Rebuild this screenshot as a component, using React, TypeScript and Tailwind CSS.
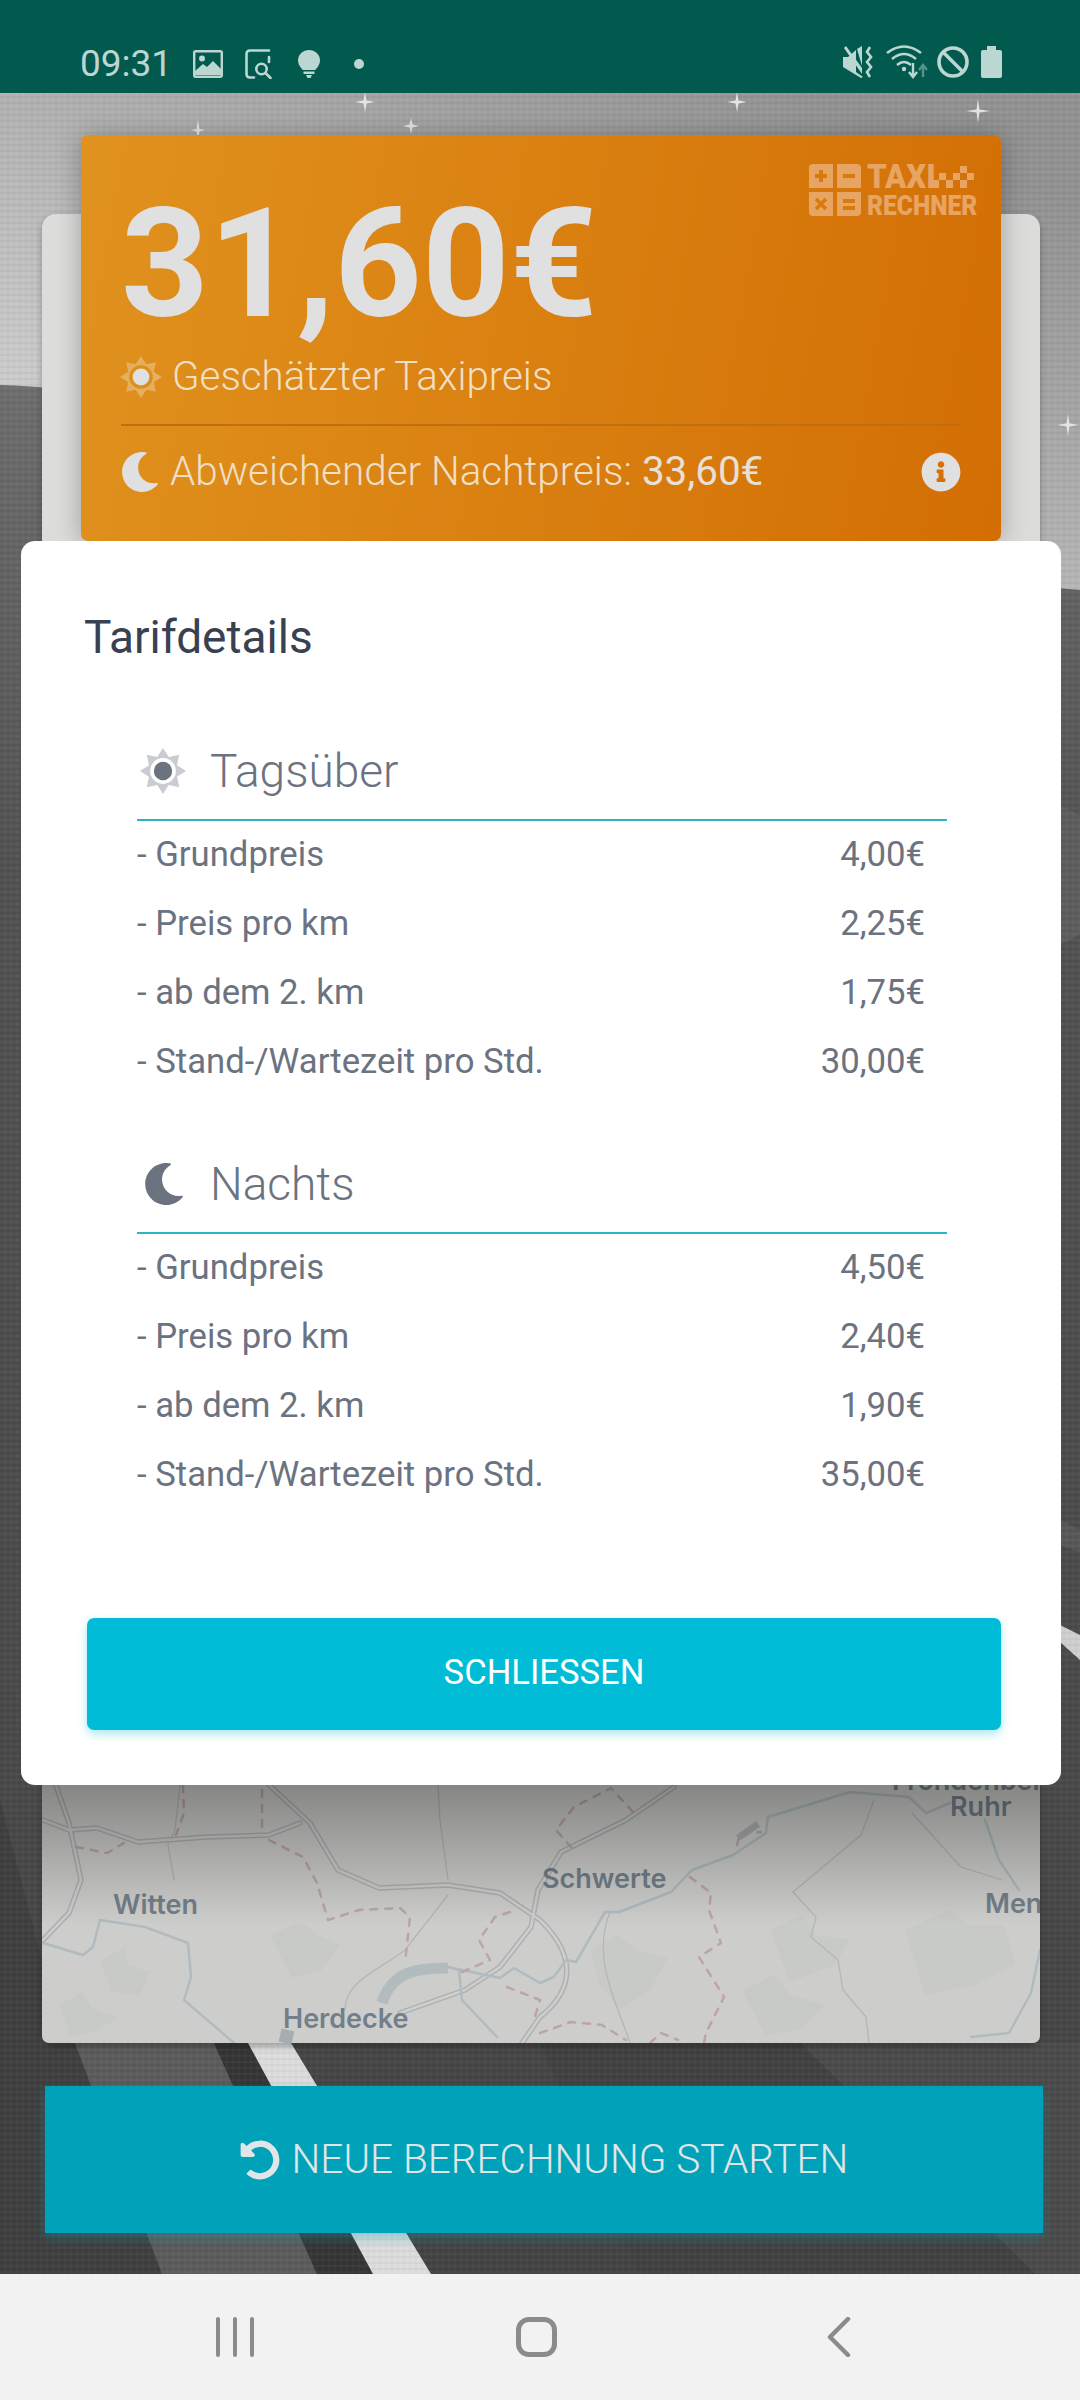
import { FaInfoCircle, FaMoon, FaUndoAlt } from 'react-icons/fa'

const starPoints = (() => {
	const pts: string[] = []
	for (let i = 0; i < 16; i++) {
		const r = i % 2 === 0 ? 50 : 33
		const a = (i * Math.PI) / 8 - Math.PI / 2
		pts.push(`${(50 + r * Math.cos(a)).toFixed(1)},${(50 + r * Math.sin(a)).toFixed(1)}`)
	}
	return pts.join(' ')
})()

const SunIcon = ({ className, ray, ring, dot }: { className: string; ray: string; ring: string; dot: string }) => (
	<svg viewBox="0 0 100 100" className={className}>
		<polygon points={starPoints} fill={ray} />
		<circle cx="50" cy="50" r="28" fill={ring} />
		<circle cx="50" cy="50" r="20" fill={dot} />
	</svg>
)

const StatusBar = () => (
	<div className="relative z-10 flex h-[93px] shrink-0 items-start justify-between bg-[#025a4e] pl-[80px] pr-[78px] pt-[45px] text-[#bcd6d1]">
		<div className="flex items-center">
			<span className="w-[113px] text-[37px] leading-[38px] font-['Roboto',sans-serif] font-normal">09:31</span>
			<svg viewBox="0 0 30 28" className="h-[28px] w-[30px]">
				<rect x="1.2" y="1.2" width="27.6" height="25.6" rx="1.5" fill="none" stroke="currentColor" strokeWidth="2.4" />
				<circle cx="9" cy="8.5" r="3" fill="currentColor" />
				<path d="M2 25 L2 21 L10 14 L14 17 L20 11 L28 19 L28 25 Z" fill="currentColor" />
			</svg>
			<svg viewBox="0 0 28 30" className="ml-[22px] h-[30px] w-[28px]" fill="none" stroke="currentColor" strokeWidth="2.6" strokeLinecap="round">
				<path d="M24 1.5 H5 Q1.5 1.5 1.5 5 V25 Q1.5 28.5 5 28.5 H9" />
				<path d="M24 8 V13" />
				<circle cx="16.5" cy="20" r="5.2" />
				<path d="M20.5 24 L25.5 29" />
			</svg>
			<svg viewBox="0 0 22 28" className="ml-[25px] h-[28px] w-[22px]" fill="currentColor">
				<path d="M11 0 C5 0 0 4.600 0 10.500 C0 14.500 2.400 17.500 4.800 20 L17.200 20 C19.600 17.500 22 14.500 22 10.500 C22 4.600 17 0 11 0 Z" />
				<path d="M5.500 21.500 H16.500 V24 H5.500 Z M8 25 H14 L12.500 28 H9.500 Z" />
			</svg>
			<span className="ml-[34px] h-[10px] w-[10px] rounded-full bg-[#bcd6d1]" />
		</div>
		<div className="flex items-center">
			<svg viewBox="0 0 30 32" className="h-[32px] w-[30px]" fill="currentColor">
				<path d="M0 11 H5 L13 4 V26 L20 31 L18 32 L0 21 Z" />
				<path d="M1 2 L3 0 L19 22 L19 28 Z" />
				<path d="M14 3 L19 0 V20 Z" />
				<path d="M27 1 L24 6 L28 11 L24 16 L28 21 L24 26 L27 31" fill="none" stroke="currentColor" strokeWidth="2.600" />
			</svg>
			<svg viewBox="0 0 42 34" className="ml-[13px] h-[34px] w-[42px]" fill="none" stroke="currentColor" strokeWidth="2.600">
				<path d="M1 8 Q18 -5 35 8" />
				<path d="M6 14 Q18 4 30 14" />
				<path d="M11 20 Q18 14 25 20" />
				<circle cx="18" cy="24" r="2.200" fill="currentColor" stroke="none" />
				<path d="M27 18 V31 M23 27 L27 32 L31 27" strokeWidth="2.400" />
				<path d="M37 32 V21 M33 25 L37 20 L41 25" strokeWidth="2.400" opacity="0.45" />
			</svg>
			<svg viewBox="0 0 32 32" className="ml-[9px] h-[32px] w-[32px]" fill="none" stroke="currentColor" strokeWidth="3.600">
				<circle cx="16" cy="16" r="14" />
				<path d="M6 6 L26 26" />
			</svg>
			<svg viewBox="0 0 21 32" className="ml-[12px] h-[32px] w-[21px]" fill="currentColor">
				<path d="M6 0 H15 V4 H19 Q21 4 21 6 V30 Q21 32 19 32 H2 Q0 32 0 30 V6 Q0 4 2 4 H6 Z" />
			</svg>
		</div>
	</div>
)

const NavBar = () => (
	<div className="relative z-10 flex h-[126px] shrink-0 items-center bg-[#f2f2f2] pl-[216px]">
		<div className="flex gap-[13px]">
			<span className="h-[40px] w-[4px] rounded-full bg-[#8b8b8b]" />
			<span className="h-[40px] w-[4px] rounded-full bg-[#8b8b8b]" />
			<span className="h-[40px] w-[4px] rounded-full bg-[#8b8b8b]" />
		</div>
		<span className="ml-[262px] h-[40px] w-[41px] rounded-[13px] border-[5px] border-[#8b8b8b]" />
		<svg viewBox="0 0 24 40" className="ml-[270px] h-[40px] w-[24px]" fill="none" stroke="#8b8b8b" strokeWidth="4.500" strokeLinecap="round" strokeLinejoin="round">
			<path d="M21 2 L3 20 L21 38" />
		</svg>
	</div>
)

const Backdrop = () => (
	<svg viewBox="0 93 1080 2181" preserveAspectRatio="none" className="absolute inset-0 h-full w-full">
		<defs>
			<pattern id="weave" width="6" height="6" patternUnits="userSpaceOnUse">
				<path d="M0 1 H6" stroke="#000" strokeOpacity="0.06" strokeWidth="1" />
				<path d="M0 4 H6" stroke="#fff" strokeOpacity="0.05" strokeWidth="1" />
				<path d="M2 0 V6" stroke="#000" strokeOpacity="0.03" strokeWidth="1" />
				<path d="M5 0 V6" stroke="#fff" strokeOpacity="0.03" strokeWidth="1" />
			</pattern>
			<linearGradient id="sky" x1="0.75" y1="0" x2="0.1" y2="0.75">
				<stop offset="0" stopColor="#929292" />
				<stop offset="1" stopColor="#d2d2d2" />
			</linearGradient>
			<linearGradient id="ground" x1="0" y1="0" x2="0" y2="1">
				<stop offset="0" stopColor="#6e6e6e" />
				<stop offset="0.25" stopColor="#525252" />
				<stop offset="1" stopColor="#434343" />
			</linearGradient>
		</defs>
		<rect x="0" y="93" width="1080" height="520" fill="url(#sky)" />
		<path d="M0 385 C300 395 700 560 1080 590 V2274 H0 Z" fill="url(#ground)" />
		<ellipse cx="1040" cy="875" rx="70" ry="72" fill="#5d5d5d" />
		<path d="M1060 1625 L1080 1635 V1660 L1060 1642 Z" fill="#cfcfcf" />
		<path d="M1060 1520 L1080 1530 V1552 L1060 1545 Z" fill="#575757" />
		<path d="M0 1800 L42 1960 V2043 H75 L162 2274 H0 Z" fill="#3f3f3f" />
		<path d="M75 2043 H214 L317 2274 H162 Z" fill="#5b5b5b" />
		<path d="M214 2043 H248 L373 2274 H317 Z" fill="#353535" />
		<path d="M248 2043 H291 L431 2274 H373 Z" fill="#dcdcdc" />
		<path d="M800 2043 H1080 V2274 H1035 Z" fill="#4a4a4a" />
		<path d="M540 2043 H800 L1035 2274 H640 Z" fill="#414141" />
		<rect x="0" y="93" width="1080" height="2181" fill="url(#weave)" />
		<g fill="#e4e4e4">
			<path d="M365 92 L366.500 100.500 L375 102 L366.500 103.500 L365 112 L363.500 103.500 L355 102 L363.500 100.500 Z" />
			<path d="M737 92 L738.500 100.500 L747 102 L738.500 103.500 L737 112 L735.500 103.500 L727 102 L735.500 100.500 Z" />
			<path d="M978 99 L979.500 109.500 L990 111 L979.500 112.500 L978 123 L976.500 112.500 L966 111 L976.500 109.500 Z" />
			<path d="M198 120 L199.500 129 L205 130 L199.500 131.500 L198 140 L196.500 131.500 L191 130 L196.500 129 Z" />
			<path d="M411 118 L412.500 124.500 L419 126 L412.500 127.500 L411 134 L409.500 127.500 L403 126 L409.500 124.500 Z" />
			<path d="M1068 414 L1069.500 423.500 L1079 425 L1069.500 426.500 L1068 436 L1066.500 426.500 L1057 425 L1066.500 423.500 Z" />
		</g>
	</svg>
)

const MapView = () => (
	<div className="relative mt-auto h-[258px] overflow-hidden rounded-b-[7px] bg-[#cdcecb]">
		<svg viewBox="42 1785 998 258" className="h-full w-full" fill="none" strokeLinecap="round" strokeLinejoin="round">
			<g fill="#c8cac7" stroke="none">
				<path d="M100 1960 L125 1948 L128 1965 L150 1972 L140 1995 L112 1992 Z" />
				<path d="M60 2005 L82 1992 L92 2008 L118 2018 L95 2032 L70 2036 Z" />
				<path d="M270 1935 L300 1922 L318 1935 L340 1945 L322 1970 L292 1978 Z" />
				<path d="M590 1950 L618 1935 L636 1950 L668 1958 L650 1990 L620 2010 L600 1985 Z" />
				<path d="M770 1930 L802 1915 L815 1935 L850 1940 L835 1965 L790 1982 Z" />
				<path d="M905 1930 L950 1910 L968 1925 L1005 1925 L1015 1965 L975 1985 L925 1995 Z" />
				<path d="M742 1990 L775 1975 L790 1995 L825 2005 L800 2030 L765 2035 Z" />
			</g>
			<g stroke="#b4b7b6" strokeWidth="1.300">
				<path d="M793 1892 L816 1917 L811 1937 L838 1960 L843 1990 L866 2017 L869 2043" />
				<path d="M793 1892 L861 1835 L874 1800" />
				<path d="M912 1813 L961 1867 L1002 1880" />
				<path d="M180 1785 L175 1830 L168 1845 L174 1880" />
				<path d="M438 1785 L440 1820 L448 1880" />
				<path d="M610 1912 C590 1960 620 2010 630 2043" />
				<path d="M345 2010 C345 1980 380 1970 405 1950 L448 1895" />
			</g>
			<g stroke="#aeb1b1" strokeWidth="5.500">
				<path d="M43 1820 L69 1830 L97 1828 L138 1842 L207 1837 L269 1835 L300 1823" />
				<path d="M55 1783 L69 1823 L81 1880 L69 1913 L43 1940" />
				<path d="M269 1785 L310 1823 L338 1870 L379 1888 L448 1885 L500 1893 L540 1920 C571 1950 580 1985 540 2017 L522 2043" />
				<path d="M400 2013 L465 1990 L500 1967 L531 1927 L538 1890 L561 1852 L626 1820 L674 1787" />
			</g>
			<g stroke="#cdcfcd" strokeWidth="2.500">
				<path d="M43 1820 L69 1830 L97 1828 L138 1842 L207 1837 L269 1835 L300 1823" />
				<path d="M55 1783 L69 1823 L81 1880 L69 1913 L43 1940" />
				<path d="M269 1785 L310 1823 L338 1870 L379 1888 L448 1885 L500 1893 L540 1920 C571 1950 580 1985 540 2017 L522 2043" />
				<path d="M400 2013 L465 1990 L500 1967 L531 1927 L538 1890 L561 1852 L626 1820 L674 1787" />
			</g>
			<g stroke="#b0bbbf" strokeWidth="2.500">
				<path d="M43 1943 L83 1955 L93 1947 L100 1920 L145 1927 L188 1943 L191 1977 L184 2000 L234 2043" />
				<path d="M448 1967 L459 1970 L462 2000 L497 2037" />
				<path d="M448 1967 L500 1978 L514 1968 L540 1983 L554 1977 L566 1960 L576 1962 L605 1912 L619 1912 L671 1892 L692 1870 L733 1855 L766 1833 L768 1817 L850 1792 L909 1797 L926 1813 L950 1803" />
				<path d="M985 1820 L999 1860 L1019 1890" />
				<path d="M1040 1950 L1031 1993 L1009 2033 L971 2037" />
			</g>
			<path d="M382 2003 C392 1972 415 1968 448 1968" stroke="#b2bbbe" strokeWidth="11" strokeLinecap="butt" />
			<path d="M285 2043 L288 2030" stroke="#a5adb2" strokeWidth="13" strokeLinecap="butt" />
			<path d="M738 1838 L758 1824" stroke="#a9b1b3" strokeWidth="7" strokeLinecap="butt" />
			<g stroke="#bca4a7" strokeWidth="2.500" strokeDasharray="7 8">
				<path d="M183 1785 L184 1813 L176 1835" />
				<path d="M262 1790 L262 1830" />
				<path d="M76 1847 L107 1853 L124 1843" />
				<path d="M269 1840 L303 1857 L317 1883 L328 1920 L359 1910 L400 1908 L410 1917 L405 1963" />
				<path d="M462 1972 L490 1960 L479 1940 L495 1917 L510 1912" />
				<path d="M507 1987 L540 2000 L534 2020" />
				<path d="M633 1812 L611 1788 L574 1807 L556 1830 L571 1847" />
				<path d="M690 1877 L711 1893 L709 1910 L721 1943 L699 1957 L724 1997 L706 2033 L704 2043" />
				<path d="M540 2033 L571 2022 L602 2025 L626 2040" />
				<path d="M650 2043 L661 2033 L678 2040" />
				<path d="M737 1845 L740 1833 L761 1832" />
			</g>
			<g fill="#737f8a" stroke="none" className="font-['Inter',sans-serif] text-[27px] font-semibold">
				<text x="113" y="1914">Witten</text>
				<text x="283" y="2028">Herdecke</text>
				<text x="542" y="1888">Schwerte</text>
				<text x="985" y="1913">Men</text>
				<text>
					<tspan x="892" y="1790">Fröndenberg/</tspan>
					<tspan x="950" y="1816">Ruhr</tspan>
				</text>
			</g>
		</svg>
		<div className="absolute inset-x-0 top-0 h-[140px] bg-gradient-to-b from-black/35 to-transparent" />
	</div>
)

const LogoMark = () => (
	<div className="absolute right-[27px] top-[29px] flex h-[52px] w-[165px] text-[#e7a462]">
		<svg viewBox="0 0 52 52" className="h-[52px] w-[52px]">
			<path d="M4 0 H24 V24 H0 V4 Q0 0 4 0 Z M28 0 H48 Q52 0 52 4 V24 H28 Z M0 28 H24 V52 H4 Q0 52 0 48 Z M28 28 H52 V48 Q52 52 48 52 H28 Z" fill="currentColor" />
			<path d="M10 6 H14 V10 H18 V14 H14 V18 H10 V14 H6 V10 H10 Z M34 10 H46 V14 H34 Z M34 35 H46 V39 H34 Z M34 42 H46 V46 H34 Z" fill="#d87a0c" />
			<path d="M7 35 L17 45 M17 35 L7 45" stroke="#d87a0c" strokeWidth="3.500" />
		</svg>
		<div className="relative ml-[6px] flex-1 font-['Roboto',sans-serif] font-black leading-none">
			<span className="absolute left-0 top-[-3px] origin-left scale-x-[0.92] text-[34px] leading-[30px]">TAXI</span>
			<span className="absolute left-0 top-[30px] origin-left scale-x-[0.91] text-[27px] leading-[24px]">RECHNER</span>
			<svg viewBox="0 0 42 22" className="absolute right-0 top-[2px] h-[22px] w-[42px]" fill="currentColor">
				<path d="M0 14 H7 V22 H0 Z M7 7 H14 V14 H7 Z M14 14 H21 V22 H14 Z M21 7 H28 V14 H21 Z M28 0 H35 V7 H28 Z M28 14 H35 V22 H28 Z M35 7 H42 V14 H35 Z" />
			</svg>
		</div>
	</div>
)

const PriceCard = () => (
	<div className="relative -mt-[79px] mx-[39px] flex h-[406px] shrink-0 flex-col rounded-[7px] bg-[linear-gradient(100deg,#e0921e,#d36e04)] pl-[40px] pr-[40px] text-[#e0e0e0] shadow-[0_2px_26px_rgba(0,0,0,0.28)]">
		<LogoMark />
		<div className="mt-[39px] flex h-[178px] items-center text-[153px] font-bold leading-none">31,60€</div>
		<div className="mt-[3px] flex h-[44px] items-center text-[40.300px] font-light leading-none text-[#f0dfc4]">
			<SunIcon className="-ml-[1px] h-[42px] w-[42px]" ray="#e6ae5e" ring="#dd8f1c" dot="#e0e0e0" />
			<span className="ml-[10px]">Geschätzter Taxipreis</span>
		</div>
		<div className="mt-[25px] h-[2px] bg-[#bf6e10]" />
		<div className="mt-[26px] flex h-[40px] items-center text-[40.400px] font-light leading-none text-[#f0dfc4]">
			<FaMoon className="-ml-[1px] h-[42px] w-[40px] text-[#e0e0e0]" />
			<span className="ml-[10px]">Abweichender Nachtpreis:</span>
			<span className="ml-[10px] font-normal text-[#e8e0d4]">33,60€</span>
			<FaInfoCircle className="ml-auto h-[40px] w-[40px] text-[#e0e0e0]" />
		</div>
	</div>
)

const Tariff = ({ icon, title, rows, className }: { icon: React.ReactNode; title: string; rows: [string, string][]; className: string }) => (
	<div className={className}>
		<div className="flex h-[88px] items-center border-b-2 border-[#2cb4c4] pb-[10px]">
			<div className="ml-[3px] flex w-[70px] shrink-0">{icon}</div>
			<span className="text-[46px] font-light leading-none text-[#6b7280]">{title}</span>
		</div>
		<div className="-mt-[1px]">
			{rows.map(([label, price]) => (
				<div key={label} className="flex h-[69px] items-center justify-between pr-[22px] text-[34.700px] leading-none text-[#6b7280]">
					<span>{label}</span>
					<span>{price}</span>
				</div>
			))}
		</div>
	</div>
)

const Modal = () => (
	<div className="absolute left-[21px] top-[448px] flex h-[1244px] w-[1040px] flex-col rounded-[14px] bg-white font-['Roboto',sans-serif]">
		<h2 className="pl-[63px] pt-[72px] text-[46px] font-normal leading-[48px] text-[#374151]">Tarifdetails</h2>
		<Tariff
			className="ml-[116px] mr-[114px] mt-[72px]"
			icon={<SunIcon className="h-[46px] w-[46px]" ray="#c9cdd1" ring="#ffffff" dot="#6b7280" />}
			title="Tagsüber"
			rows={[
				['- Grundpreis', '4,00€'],
				['- Preis pro km', '2,25€'],
				['- ab dem 2. km', '1,75€'],
				['- Stand-/Wartezeit pro Std.', '30,00€'],
			]}
		/>
		<Tariff
			className="ml-[116px] mr-[114px] mt-[50px]"
			icon={<FaMoon className="ml-[3px] h-[46px] w-[42px] text-[#6b7280]" />}
			title="Nachts"
			rows={[
				['- Grundpreis', '4,50€'],
				['- Preis pro km', '2,40€'],
				['- ab dem 2. km', '1,90€'],
				['- Stand-/Wartezeit pro Std.', '35,00€'],
			]}
		/>
		<button className="mb-[55px] ml-[66px] mr-[60px] mt-auto flex h-[112px] items-center justify-center rounded-[7px] bg-[#00bcd6] pb-[2px] text-[34.600px] font-normal text-white shadow-[0_4px_10px_rgba(0,188,214,0.35)]">
			SCHLIESSEN
		</button>
	</div>
)

export default function App() {
	return (
		<div className="flex h-[2400px] w-[1080px] flex-col overflow-hidden font-['Roboto',sans-serif]">
			<StatusBar />
			<main className="relative flex min-h-0 flex-1 flex-col">
				<Backdrop />
				<div className="relative ml-[42px] mr-[40px] mt-[121px] flex h-[1829px] shrink-0 flex-col rounded-[14px] bg-[#dcdcda] shadow-[0_3px_6px_rgba(0,0,0,0.3)]">
					<PriceCard />
					<MapView />
				</div>
				<button className="relative ml-[45px] mt-[43px] flex h-[147px] w-[998px] items-center justify-center bg-[#00a2b9] text-[40.500px] font-light text-[#e0e6e8] shadow-[0_5px_10px_rgba(0,162,185,0.35)]">
					<FaUndoAlt className="mr-[12px] h-[40px] w-[40px]" />
					NEUE BERECHNUNG STARTEN
				</button>
				<Modal />
			</main>
			<NavBar />
		</div>
	)
}
